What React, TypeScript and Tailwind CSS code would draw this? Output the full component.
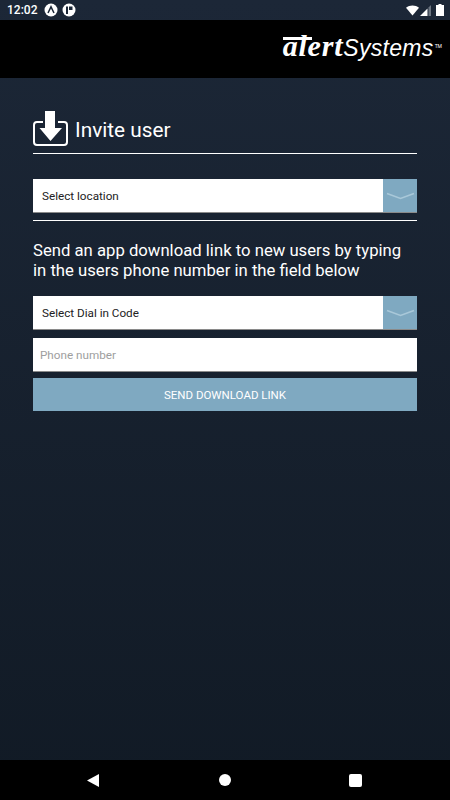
import React from 'react';

function Chevron() {
  return (
    <div className="w-[34px] h-full bg-[#7fa9c1] flex items-center justify-center">
      <svg width="29" height="8" viewBox="0 0 29 8" fill="none">
        <path d="M1 1.5 L14.5 6.5 L28 1.5" stroke="#a9c8d9" strokeWidth="1.6" />
      </svg>
    </div>
  );
}

function SelectBox({ label }: { label: string }) {
  return (
    <div className="flex h-[33px] bg-white shadow-[0_1px_0_#8a8a8a]">
      <div className="flex-1 flex items-center pl-[9px] pt-[2px] text-[11.7px] text-[#222]">{label}</div>
      <Chevron />
    </div>
  );
}

function StatusBar() {
  return (
    <div className="h-[20px] flex items-center justify-between pl-[7px] pr-[6px] text-white">
      <div className="flex items-center">
        <span className="text-[12px] font-medium w-[37px]">12:02</span>
        <svg width="14" height="14" viewBox="0 0 14 14">
          <circle cx="7" cy="7" r="6.5" fill="#fff" />
          <path d="M4 10 L7 3.8 L10 10" fill="none" stroke="#1c2737" strokeWidth="1.5" />
        </svg>
        <svg width="14" height="14" viewBox="0 0 14 14" className="ml-[4px]">
          <circle cx="7" cy="7" r="6.5" fill="#fff" />
          <rect x="4" y="3.5" width="2" height="7.5" fill="#1c2737" />
          <path d="M7 3.5 H10.5 V7 H7 Z" fill="#1c2737" />
        </svg>
      </div>
      <div className="flex items-center">
        <svg width="13" height="11" viewBox="0 0 14 11">
          <path d="M0 2.5 C4 -0.8 10 -0.8 14 2.5 L7 11 Z" fill="#fff" />
        </svg>
        <svg width="11" height="11" viewBox="0 0 11 11" className="ml-[1px]">
          <path d="M7.5 3.5 V11 H0 Z" fill="#fff" />
          <path d="M8.5 2.5 L11 0 V11 H8.5 Z" fill="#6b7480" />
        </svg>
        <svg width="8" height="12" viewBox="0 0 8 12" className="ml-[5px]">
          <path d="M2.5 0 H5.5 V1 H8 V12 H0 V1 H2.5 Z" fill="#fff" />
        </svg>
      </div>
    </div>
  );
}

function DownloadIcon() {
  return (
    <svg width="35" height="37" viewBox="0 0 35 37" fill="none">
      <path
        d="M10 12 H4 Q1 12 1 15 V32 Q1 35 4 35 H31 Q34 35 34 32 V15 Q34 12 31 12 H25"
        stroke="#fff"
        strokeWidth="2"
      />
      <path d="M12 1 H22 V18 H29 L17.5 31 L6.5 18 H12 Z" fill="#fff" />
    </svg>
  );
}

export default function App() {
  return (
    <div
      className="w-[450px] h-[800px] flex flex-col overflow-hidden bg-gradient-to-b from-[#1c2737] to-[#111a25] text-white"
      style={{ fontFamily: 'Roboto, sans-serif' }}
    >
      <StatusBar />

      <div className="h-[58px] bg-black flex justify-end items-center pr-[8px]">
        <div className="relative flex items-baseline leading-none mt-[-7px]">
          <span
            className="text-[30px] italic font-bold tracking-[0.8px]"
            style={{ fontFamily: '"Liberation Serif", serif' }}
          >
            alert
          </span>
          <span
            className="text-[23px] italic tracking-[0.3px]"
            style={{ fontFamily: '"Liberation Sans", sans-serif' }}
          >
            Systems
          </span>
          <span className="text-[5px] self-start mt-[13px] ml-[1px]">TM</span>
          <div className="absolute left-[0px] top-[6px] w-[29px] h-[3px] bg-white" />
        </div>
      </div>

      <div className="flex-1 px-[33px] pt-[32px]">
        <div className="flex items-center gap-[7px] h-[37px]">
          <DownloadIcon />
          <span className="text-[20.8px] mt-[5px]">Invite user</span>
        </div>
        <div className="h-px bg-white mt-[6px] mb-[25px]" />

        <SelectBox label="Select location" />
        <div className="h-px bg-white mt-[8px] mb-[20px]" />

        <p className="text-[16.7px] leading-[20px] mb-[15px]">
          Send an app download link to new users by typing in the users phone number in the field below
        </p>

        <SelectBox label="Select Dial in Code" />

        <input
          readOnly
          placeholder="Phone number"
          className="block w-full h-[33px] mt-[9px] pl-[7px] bg-white text-[11.7px] placeholder:text-[#9e9e9e] shadow-[0_1px_0_#8a8a8a] outline-none"
        />

        <button className="block w-full h-[33px] mt-[7px] pt-[2px] bg-[#7fa9c1] text-[11.5px] text-white">
          SEND DOWNLOAD LINK
        </button>
      </div>

      <div className="h-[40px] bg-black flex items-center justify-between pl-[86px] pr-[88px]">
        <svg width="14" height="14" viewBox="0 0 14 14">
          <path d="M13 1 V14 L1 7.5 Z" fill="#fff" />
        </svg>
        <div className="w-[12px] h-[12px] rounded-full bg-white" />
        <div className="w-[13px] h-[13px] rounded-[2px] bg-white" />
      </div>
    </div>
  );
}
